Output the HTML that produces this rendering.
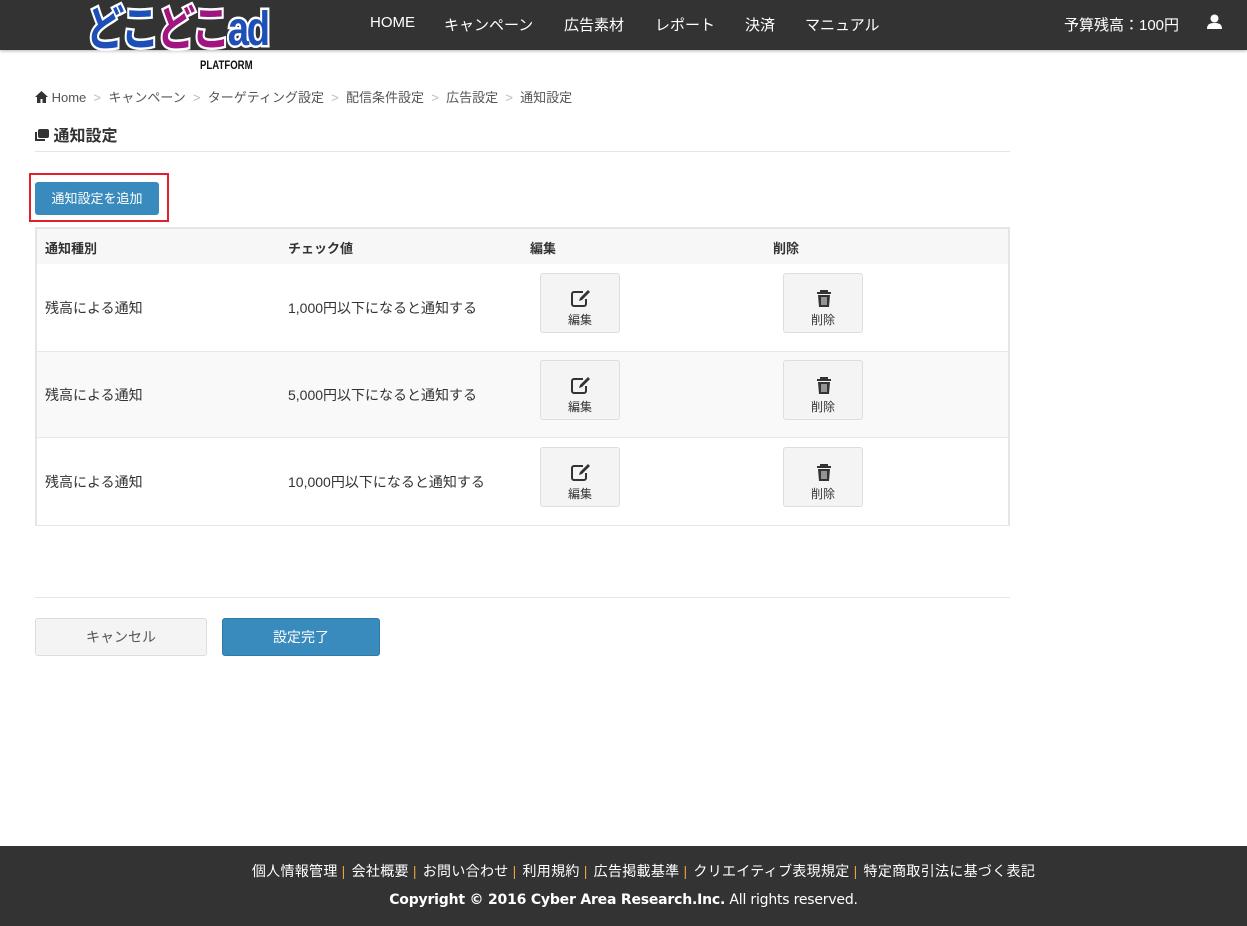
<!DOCTYPE html>
<html><head><meta charset="utf-8"><style>
*{box-sizing:border-box;margin:0;padding:0}
body{width:1247px;height:926px;position:relative;font-family:"Liberation Sans","Noto Sans CJK JP",sans-serif;font-size:14px;color:#333;background:#fff;overflow:hidden}
.hdr{position:absolute;left:0;top:0;width:1247px;height:50px;background:#333;box-shadow:0 1px 3px rgba(0,0,0,.3)}
.nav{position:absolute;top:14px;font-size:15px;color:#fff}
.a{position:absolute;white-space:nowrap}
.crumb{top:87px;font-size:13px;color:#555}
.sep{color:#bbb}
.tbl{position:absolute;left:35px;top:227px;width:975px;height:299px;border:2px solid #e5e5e5}
.row{position:absolute;left:0;width:971px}
.btn{position:absolute;width:80px;height:60px;background:#f4f4f4;border:1px solid #ddd;border-radius:3px;font-size:12px;text-align:center;padding-top:37px;color:#333}
.btn svg{position:absolute;left:30px;top:16px}
.s{color:#e8a33a;margin:0 6px 0 4px}
</style></head><body>
<div class="hdr"></div>
<div class="a" style="left:86px;top:4px;font-size:48px;font-weight:bold;letter-spacing:-3px;line-height:52px;-webkit-text-stroke:5px #fff;paint-order:stroke fill;transform:scaleX(0.8);transform-origin:left"><span style="color:#1d4fb8">どこ</span><span style="color:#a0157f">どこ</span><span style="color:#1d4fb8">ad</span></div>
<div class="a" style="left:200px;top:58px;font-size:12px;font-weight:bold;color:#111;transform:scaleX(0.8);transform-origin:left">PLATFORM</div>
 <div class="nav" style="left:370px">HOME</div>
 <div class="nav" style="left:444px">キャンペーン</div>
 <div class="nav" style="left:564px">広告素材</div>
 <div class="nav" style="left:655px">レポート</div>
 <div class="nav" style="left:745px">決済</div>
 <div class="nav" style="left:805px">マニュアル</div>
 <div class="nav" style="left:1064px">予算残高：100円</div>
 <svg class="a" style="left:1207px;top:14px" width="15" height="15" viewBox="0 0 15 15"><circle cx="7.5" cy="4.5" r="4" fill="#fff"/><path d="M0 15c0-5 3-6 7.5-6s7.5 1 7.5 6z" fill="#fff"/></svg>
<div class="a crumb" style="left:35px"><svg width="13" height="12" viewBox="0 0 13 12" style="vertical-align:-1px"><path d="M6.5 0L0 6h2v6h3.5V8h2v4H11V6h2z" fill="#333"/></svg> Home <span class="sep">&nbsp;&gt;&nbsp;</span> キャンペーン <span class="sep">&nbsp;&gt;&nbsp;</span> ターゲティング設定 <span class="sep">&nbsp;&gt;&nbsp;</span> 配信条件設定 <span class="sep">&nbsp;&gt;&nbsp;</span> 広告設定 <span class="sep">&nbsp;&gt;&nbsp;</span> 通知設定</div>
<div class="a" style="left:35px;top:122px;font-size:16px;font-weight:bold"><svg width="14" height="13" viewBox="0 0 14 13" style="vertical-align:-1px"><rect x="3" y="0" width="11" height="9" rx="2" fill="#333"/><path d="M1 3v8h9" stroke="#333" stroke-width="2" fill="none"/></svg> 通知設定</div>
<div class="a" style="left:35px;top:151px;width:975px;height:1px;background:#e5e5e5"></div>
<div class="a" style="left:29px;top:173px;width:140px;height:49px;border:2px solid #e0202a"></div>
<div class="a" style="left:35px;top:182px;width:124px;height:33px;background:#3a8bbd;border-radius:3px;color:#fff;font-size:13px;text-align:center;line-height:33px">通知設定を追加</div>
<div class="tbl">
 <div class="row" style="top:0;height:35px;background:#f7f7f7;font-weight:bold;font-size:13px">
  <span class="a" style="left:8px;top:9px">通知種別</span><span class="a" style="left:251px;top:9px">チェック値</span><span class="a" style="left:493px;top:9px">編集</span><span class="a" style="left:736px;top:9px">削除</span></div>
 <div class="row" style="top:35px;height:87px;background:#fff"></div>
 <div class="row" style="top:122px;height:87px;background:#f9f9f9;border-top:1px solid #e8e8e8;border-bottom:1px solid #e8e8e8"></div>
 <div class="row" style="top:209px;height:87px;background:#fff"></div>
</div>
<div id="rows"></div>
<script>
var v=["1,000","5,000","10,000"],h="";
for(var i=0;i<3;i++){var y=264+87*i;
h+='<div class="a" style="left:45px;top:'+(y+34)+'px">残高による通知</div><div class="a" style="left:288px;top:'+(y+34)+'px">'+v[i]+'円以下になると通知する</div>';
h+='<div class="btn" style="left:540px;top:'+(y+9)+'px"><svg width="20" height="17" viewBox="0 0 20 17"><path d="M12 2H3a2 2 0 0 0-2 2v10a2 2 0 0 0 2 2h10a2 2 0 0 0 2-2V9" stroke="#333" stroke-width="2" fill="none"/><path d="M8 11l1-3 8-8 2 2-8 8z" fill="#333"/></svg>編集</div>';
h+='<div class="btn" style="left:783px;top:'+(y+9)+'px"><svg width="20" height="17" viewBox="0 0 20 17"><path d="M3 3h14M7 3V1h6v2" stroke="#333" stroke-width="2" fill="none"/><path d="M4 5h12l-1 12H5z" fill="#333"/><path d="M8 7v8M10 7v8M12 7v8" stroke="#f4f4f4" stroke-width="1"/></svg>削除</div>';}
document.getElementById("rows").innerHTML=h;
</script>
<div class="a" style="left:35px;top:597px;width:975px;height:1px;background:#e5e5e5"></div>
<div class="a" style="left:35px;top:618px;width:172px;height:38px;background:#f4f4f4;border:1px solid #ddd;border-radius:3px;text-align:center;line-height:36px;color:#555">キャンセル</div>
<div class="a" style="left:222px;top:618px;width:158px;height:38px;background:#3a8bbd;border:1px solid #2f7aa8;border-radius:3px;text-align:center;line-height:36px;color:#fff">設定完了</div>
<div class="a" style="left:0;top:846px;width:1247px;height:80px;background:#333;color:#fff;text-align:center">
 <div style="margin-top:15px;font-size:14px;letter-spacing:0.3px;padding-left:40px">個人情報管理<span class="s">|</span>会社概要<span class="s">|</span>お問い合わせ<span class="s">|</span>利用規約<span class="s">|</span>広告掲載基準<span class="s">|</span>クリエイティブ表現規定<span class="s">|</span>特定商取引法に基づく表記</div>
 <div style="margin-top:11px;font-size:14px;font-family:'DejaVu Sans',sans-serif;letter-spacing:-0.2px"><b>Copyright © 2016 Cyber Area Research.Inc.</b> All rights reserved.</div>
</div>
</body></html>
